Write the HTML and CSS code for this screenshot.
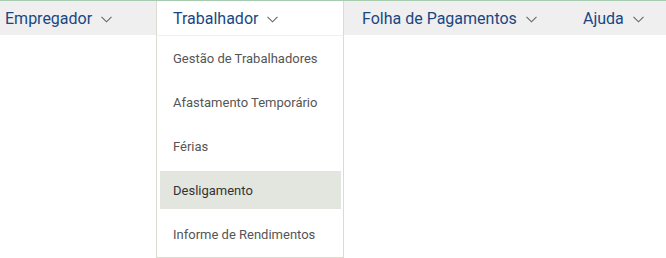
FILE: index.html
```html
<!DOCTYPE html>
<html lang="pt-BR">
<head>
  <meta charset="UTF-8">
  <title>Menu</title>
  <link rel="stylesheet" href="styles.css">
</head>
<body>
  <nav class="menu-bar">
    <div class="menu-item item-empregador">Empregador <span class="chev"><svg width="11" height="7" viewBox="0 0 11 7"><path d="M0.5 0.8 L5.5 5.8 L10.5 0.8" fill="none" stroke="#666" stroke-width="1.1"/></svg></span></div>
    <div class="menu-item item-trabalhador active">Trabalhador <span class="chev"><svg width="11" height="7" viewBox="0 0 11 7"><path d="M0.5 0.8 L5.5 5.8 L10.5 0.8" fill="none" stroke="#666" stroke-width="1.1"/></svg></span>
      <ul class="dropdown">
        <li>Gestão de Trabalhadores</li>
        <li>Afastamento Temporário</li>
        <li>Férias</li>
        <li class="hover">Desligamento</li>
        <li>Informe de Rendimentos</li>
      </ul>
    </div>
    <div class="menu-item item-folha">Folha de Pagamentos <span class="chev"><svg width="11" height="7" viewBox="0 0 11 7"><path d="M0.5 0.8 L5.5 5.8 L10.5 0.8" fill="none" stroke="#666" stroke-width="1.1"/></svg></span></div>
    <div class="menu-item item-ajuda">Ajuda <span class="chev"><svg width="11" height="7" viewBox="0 0 11 7"><path d="M0.5 0.8 L5.5 5.8 L10.5 0.8" fill="none" stroke="#666" stroke-width="1.1"/></svg></span></div>
  </nav>
</body>
</html>
```
FILE: styles.css
```css
html, body {
  min-height: 258px;
}

body {
  margin: 0;
  background: #fff;
  font-family: Roboto, "Liberation Sans", Arial, sans-serif;
}

.menu-bar {
  display: flex;
  height: 34px;
  background: #efefef;
  border-top: 1px solid #a6cbb0;
}

.menu-item {
  position: relative;
  display: flex;
  align-items: center;
  box-sizing: border-box;
  padding-left: 17px;
  font-size: 16px;
  color: #1a4682;
  white-space: nowrap;
}

.chev {
  display: inline-flex;
  margin-left: 9px;
  margin-top: 2px;
}

.item-empregador {
  width: 156px;
  padding-left: 5px;
}

.item-trabalhador {
  width: 188px;
  background: #fff;
  border-left: 1px solid #dcdbd2;
  border-right: 1px solid #dcdbd2;
  padding-left: 16px;
}

.item-folha {
  width: 222px;
  padding-left: 18px;
}

.item-ajuda {
  flex: 1;
  padding-left: 17px;
}

.dropdown {
  position: absolute;
  top: 34px;
  left: -1px;
  z-index: 2;
  width: 188px;
  box-sizing: border-box;
  margin: 0;
  padding: 3px 2px 4px 3px;
  list-style: none;
  background: #fff;
  border: 1px solid #dcdbd2;
  border-top: 1px solid #f0f0f0;
  display: flex;
  flex-direction: column;
  gap: 6px;
}

.dropdown li {
  height: 38px;
  display: flex;
  align-items: center;
  padding-left: 13px;
  font-size: 13px;
  color: #555;
}

.dropdown li.hover {
  background: #e3e5df;
  color: #333;
}
```
